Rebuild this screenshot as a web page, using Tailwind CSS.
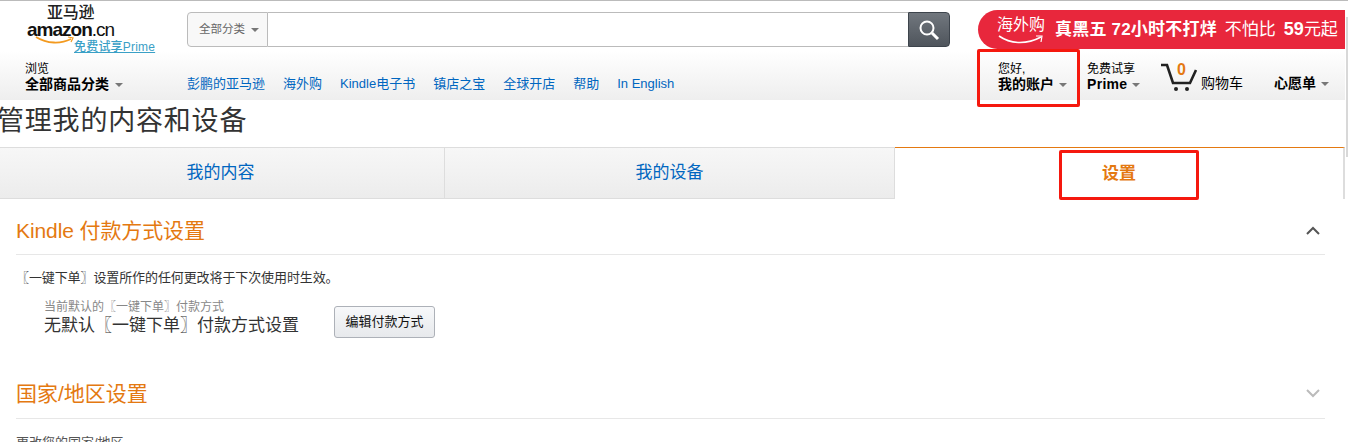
<!DOCTYPE html>
<html lang="zh-CN">
<head>
    <meta charset="UTF-8">
    <title>管理我的内容和设备</title>
    <script src="https://cdn.jsdelivr.net/npm/@tailwindcss/browser@4"></script>
</head>
<body class="bg-white text-[#333] font-['Liberation_Sans','Noto_Sans_CJK_SC',sans-serif] overflow-hidden">
<div class="relative h-[442px] w-[1348px] overflow-hidden">
    <!-- header -->
    <header class="h-[100px] border-t border-[#bbb] bg-gradient-to-b from-white from-50% to-[#eeeeee]">
        <div class="flex h-[54px]">
            <div class="relative ml-[26px] w-[161px]">
                <div class="absolute left-[21px] top-[5px] text-[16px] leading-[14px] font-medium text-[#222] tracking-[-0.3px]">亚马逊</div>
                <div class="absolute left-[1px] top-[19px] text-[19px] leading-[20px] font-bold text-[#111] tracking-[-1px]">amazon<span class="font-normal">.cn</span></div>
                <svg class="absolute left-[9px] top-[35px]" width="46" height="10" viewBox="0 0 46 10"><path d="M1 1 C12 8 26 8 36 3" fill="none" stroke="#f39a1f" stroke-width="1.8"/><path d="M33 1 L38 2 L36 6" fill="none" stroke="#f39a1f" stroke-width="1.2"/></svg>
                <a class="absolute left-[48px] top-[39px] text-[12px] leading-[14px] text-[#3aa0c6] underline whitespace-nowrap font-medium tracking-[0.2px]">免费试享Prime</a>
            </div>
            <div class="mt-[11px] flex h-[35px] w-[763px]">
                <div class="flex w-[81px] items-center gap-[6px] rounded-l-[4px] border border-[#bbb] bg-[#f8f8f8] pl-[11px] pt-[1px] text-[11.5px] text-[#666]">全部分类 <span class="h-0 w-0 border-x-[4px] border-t-[4px] border-x-transparent border-t-[#777]"></span></div>
                <div class="flex-1 border-y border-[#bbb] bg-white"></div>
                <div class="flex w-[42px] items-center justify-center rounded-r-[4px] border border-[#3d444c] bg-gradient-to-b from-[#71777e] to-[#4f555c]">
                    <svg width="24" height="24" viewBox="0 0 24 24" fill="none" stroke="white"><circle cx="10" cy="10" r="6.5" stroke-width="2"/><path d="M15 15 L21 21" stroke-width="3"/></svg>
                </div>
            </div>
            <div class="ml-[28px] mt-[9px] flex h-[39px] w-[367px] items-center rounded-l-[20px] bg-[#e8273c] pl-[19px] text-white whitespace-nowrap">
                <div class="relative h-[39px] w-[48px]">
                    <span class="absolute left-0 top-[6px] text-[16px] leading-[18px]">海外购</span>
                    <svg class="absolute left-[1px] top-[24px]" width="46" height="12" viewBox="0 0 46 12" fill="none" stroke="white"><path d="M1 2 C14 11 30 10 43 3" stroke-width="1.6"/><path d="M38 2 L44 2 L43 8" stroke-width="1.2"/></svg>
                </div>
                <span class="ml-[10px] text-[17px] font-bold tracking-[0.2px]">真黑五 72小时不打烊</span>
                <span class="ml-[8px] text-[17px] font-normal">不怕比</span>
                <span class="ml-[8px] text-[18px] font-bold">59</span><span class="text-[17px]">元起</span>
            </div>
        </div>
        <nav class="flex h-[45px] w-[1345px]">
            <div class="ml-[25px] mt-[7px] w-[162px] text-[12px] leading-[15px] text-black">
                <div>浏览</div>
                <div class="flex items-center gap-[6px] text-[14px] font-bold">全部商品分类 <span class="h-0 w-0 border-x-[4px] border-t-[4px] border-x-transparent border-t-[#777]"></span></div>
            </div>
            <ul class="mt-[20px] flex h-[18px] items-center gap-[18px] text-[13px] text-[#0066c0]">
                <li>彭鹏的亚马逊</li>
                <li>海外购</li>
                <li>Kindle电子书</li>
                <li>镇店之宝</li>
                <li>全球开店</li>
                <li>帮助</li>
                <li>In English</li>
            </ul>
            <div class="ml-auto flex text-black">
                <div class="mt-[7px] w-[89px] text-[12px] leading-[15px]">
                    <div>您好,</div>
                    <div class="flex items-center gap-[5px] text-[14px] font-bold">我的账户 <span class="h-0 w-0 border-x-[4px] border-t-[4px] border-x-transparent border-t-[#777]"></span></div>
                </div>
                <div class="mt-[7px] w-[73px] text-[12px] leading-[15px]">
                    <div>免费试享</div>
                    <div class="flex items-center gap-[5px] text-[14px] font-bold tracking-[0.3px]">Prime <span class="h-0 w-0 border-x-[4px] border-t-[4px] border-x-transparent border-t-[#777]"></span></div>
                </div>
                <div class="relative w-[114px]">
                    <svg class="absolute left-0 top-[8px]" width="40" height="30" viewBox="0 0 40 30" fill="none" stroke="#222"><path d="M1 2 H7 L13 20 H30 L36 7" stroke-width="2.6"/><circle cx="16" cy="26" r="2" fill="#222" stroke="none"/><circle cx="27" cy="26" r="2" fill="#222" stroke="none"/></svg>
                    <span class="absolute left-[17px] top-[6px] text-[16px] leading-[18px] font-bold text-[#e47911]">0</span>
                    <span class="absolute left-[41px] top-[21px] text-[14px] leading-[15px]">购物车</span>
                </div>
                <div class="mt-[21px] flex w-[71px] items-start gap-[5px] text-[14px] leading-[15px] font-bold">心愿单 <span class="mt-[6px] h-0 w-0 border-x-[4px] border-t-[4px] border-x-transparent border-t-[#777]"></span></div>
            </div>
        </nav>
    </header>

    <h1 class="ml-[-3px] h-[47px] text-[27px] leading-[42px] font-normal text-[#333] tracking-[0.8px]">管理我的内容和设备</h1>

    <!-- tabs -->
    <div class="flex h-[52px] w-[1345px] text-[17px]">
        <div class="flex w-[445px] items-center justify-center border-y border-r border-[#ddd] bg-gradient-to-b from-[#f7f7f7] to-[#ececec] pr-[3px] text-[#0066c0]">我的内容</div>
        <div class="flex w-[450px] items-center justify-center border-y border-r border-[#ddd] bg-gradient-to-b from-[#f7f7f7] to-[#ececec] text-[#0066c0]">我的设备</div>
        <div class="flex flex-1 items-center justify-center border-t border-r-2 border-t-[#e47911] border-r-[#ddd] font-bold text-[#e47911]">设置</div>
    </div>

    <!-- sections -->
    <main class="mx-[16px] w-[1309px]">
        <div class="flex h-[56px] items-center justify-between border-b border-[#e7e7e7] pt-[8px]">
            <h2 class="text-[21px] font-normal text-[#e47911] tracking-[-0.1px]">Kindle 付款方式设置</h2>
            <svg class="mr-[5px]" width="14" height="9" viewBox="0 0 14 9" fill="none" stroke="#555" stroke-width="2"><path d="M1 8 L7 2 L13 8"/></svg>
        </div>
        <p class="mt-[15px] text-[13px] leading-[16px] text-[#333] tracking-[-0.1px]">〖一键下单〗设置所作的任何更改将于下次使用时生效。</p>
        <div class="mt-[14px] ml-[28px] flex">
            <div class="w-[290px]">
                <div class="text-[12px] leading-[14px] text-[#888]">当前默认的〖一键下单〗付款方式</div>
                <div class="mt-[2px] text-[17px] leading-[20px] text-[#333]">无默认〖一键下单〗付款方式设置</div>
            </div>
            <button class="mt-[6px] h-[32px] w-[101px] rounded-[3px] border border-[#adb1b8] bg-gradient-to-b from-[#f7f8fa] to-[#e7e9ec] text-[13px] text-[#111]">编辑付款方式</button>
        </div>
        <div class="mt-[27px] flex h-[54px] items-center justify-between border-b border-[#e7e7e7] pt-[4px]">
            <h2 class="text-[21px] font-normal text-[#e47911]">国家/地区设置</h2>
            <svg class="mr-[5px]" width="14" height="9" viewBox="0 0 14 9" fill="none" stroke="#bbb" stroke-width="2"><path d="M1 1 L7 7 L13 1"/></svg>
        </div>
        <p class="mt-[16px] text-[13px] leading-[16px] text-[#555]">更改您的国家/地区</p>
    </main>

    <!-- annotation boxes -->
    <div class="absolute left-[977px] top-[49px] h-[58px] w-[103px] rounded-[2px] border-[3px] border-[#f5180e]"></div>
    <div class="absolute left-[1059px] top-[150px] h-[50px] w-[140px] rounded-[2px] border-[3px] border-[#f5180e]"></div>

    <!-- scrollbar strip on the right edge -->
    <div class="absolute left-[1345px] top-[1px] bottom-0 w-[3px] bg-white">
        <div class="ml-[1px] mt-[16px] h-[140px] w-[2px] bg-[#d8d8d8]"></div>
    </div>
</div>
</body>
</html>
